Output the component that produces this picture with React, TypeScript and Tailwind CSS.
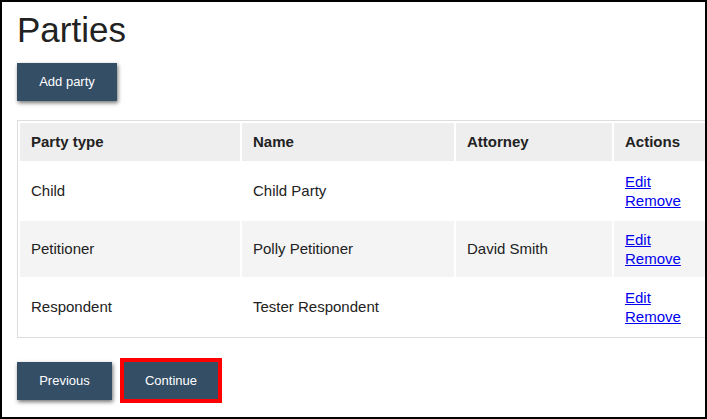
import React from 'react';

type Party = { type: string; name: string; attorney: string };

const parties: Party[] = [
  { type: 'Child', name: 'Child Party', attorney: '' },
  { type: 'Petitioner', name: 'Polly Petitioner', attorney: 'David Smith' },
  { type: 'Respondent', name: 'Tester Respondent', attorney: '' },
];

const btn =
  'h-[38px] bg-[#344e66] text-white text-[13px] leading-[18px] shadow-[1px_2px_4px_rgba(0,0,0,0.55)] flex items-center justify-center';

const App: React.FC = () => {
  return (
    <div className="w-[707px] h-[419px] border-2 border-black bg-white overflow-hidden font-['Liberation_Sans',Arial,sans-serif] text-[#222]">
      <div className="pl-[15px] pt-[8px]">
        <h1 className="text-[35px] leading-[40px] font-normal text-[#222]">Parties</h1>

        <button className={`${btn} w-[100px] mt-[13px]`}>Add party</button>

        <table className="mt-[19px] table-fixed border-separate border-spacing-[2px] border border-[#ddd] w-[710px] text-[15px] leading-[18px]">
          <colgroup>
            <col className="w-[220px]" />
            <col className="w-[212px]" />
            <col className="w-[156px]" />
            <col className="w-[112px]" />
          </colgroup>
          <thead>
            <tr className="bg-[#eee] h-[38px]">
              <th className="text-left font-bold px-[11px] py-[10px]">Party type</th>
              <th className="text-left font-bold px-[11px] py-[10px]">Name</th>
              <th className="text-left font-bold px-[11px] py-[10px]">Attorney</th>
              <th className="text-left font-bold px-[11px] py-[10px]">Actions</th>
            </tr>
          </thead>
          <tbody>
            {parties.map((p, i) => (
              <tr key={p.name} className={`h-[56px] ${i % 2 === 1 ? 'bg-[#f4f4f4]' : 'bg-white'}`}>
                <td className="px-[11px] py-[9px] align-middle">{p.type}</td>
                <td className="px-[11px] py-[9px] align-middle">{p.name}</td>
                <td className="px-[11px] py-[9px] align-middle">{p.attorney}</td>
                <td className="px-[11px] py-[9px] align-middle leading-[19px]">
                  <a href="#" className="block w-fit text-[#0000ee] underline">Edit</a>
                  <a href="#" className="block w-fit text-[#0000ee] underline">Remove</a>
                </td>
              </tr>
            ))}
          </tbody>
        </table>

        <div className="flex items-center gap-[8px] mt-[20px]">
          <button className={`${btn} w-[95px]`}>Previous</button>
          <div className="border-4 border-[#ff0000] w-[102px] h-[45px]">
            <button className="w-full h-full bg-[#344e66] text-white text-[13px] leading-[18px] flex items-center justify-center">
              Continue
            </button>
          </div>
        </div>
      </div>
    </div>
  );
};

export default App;
